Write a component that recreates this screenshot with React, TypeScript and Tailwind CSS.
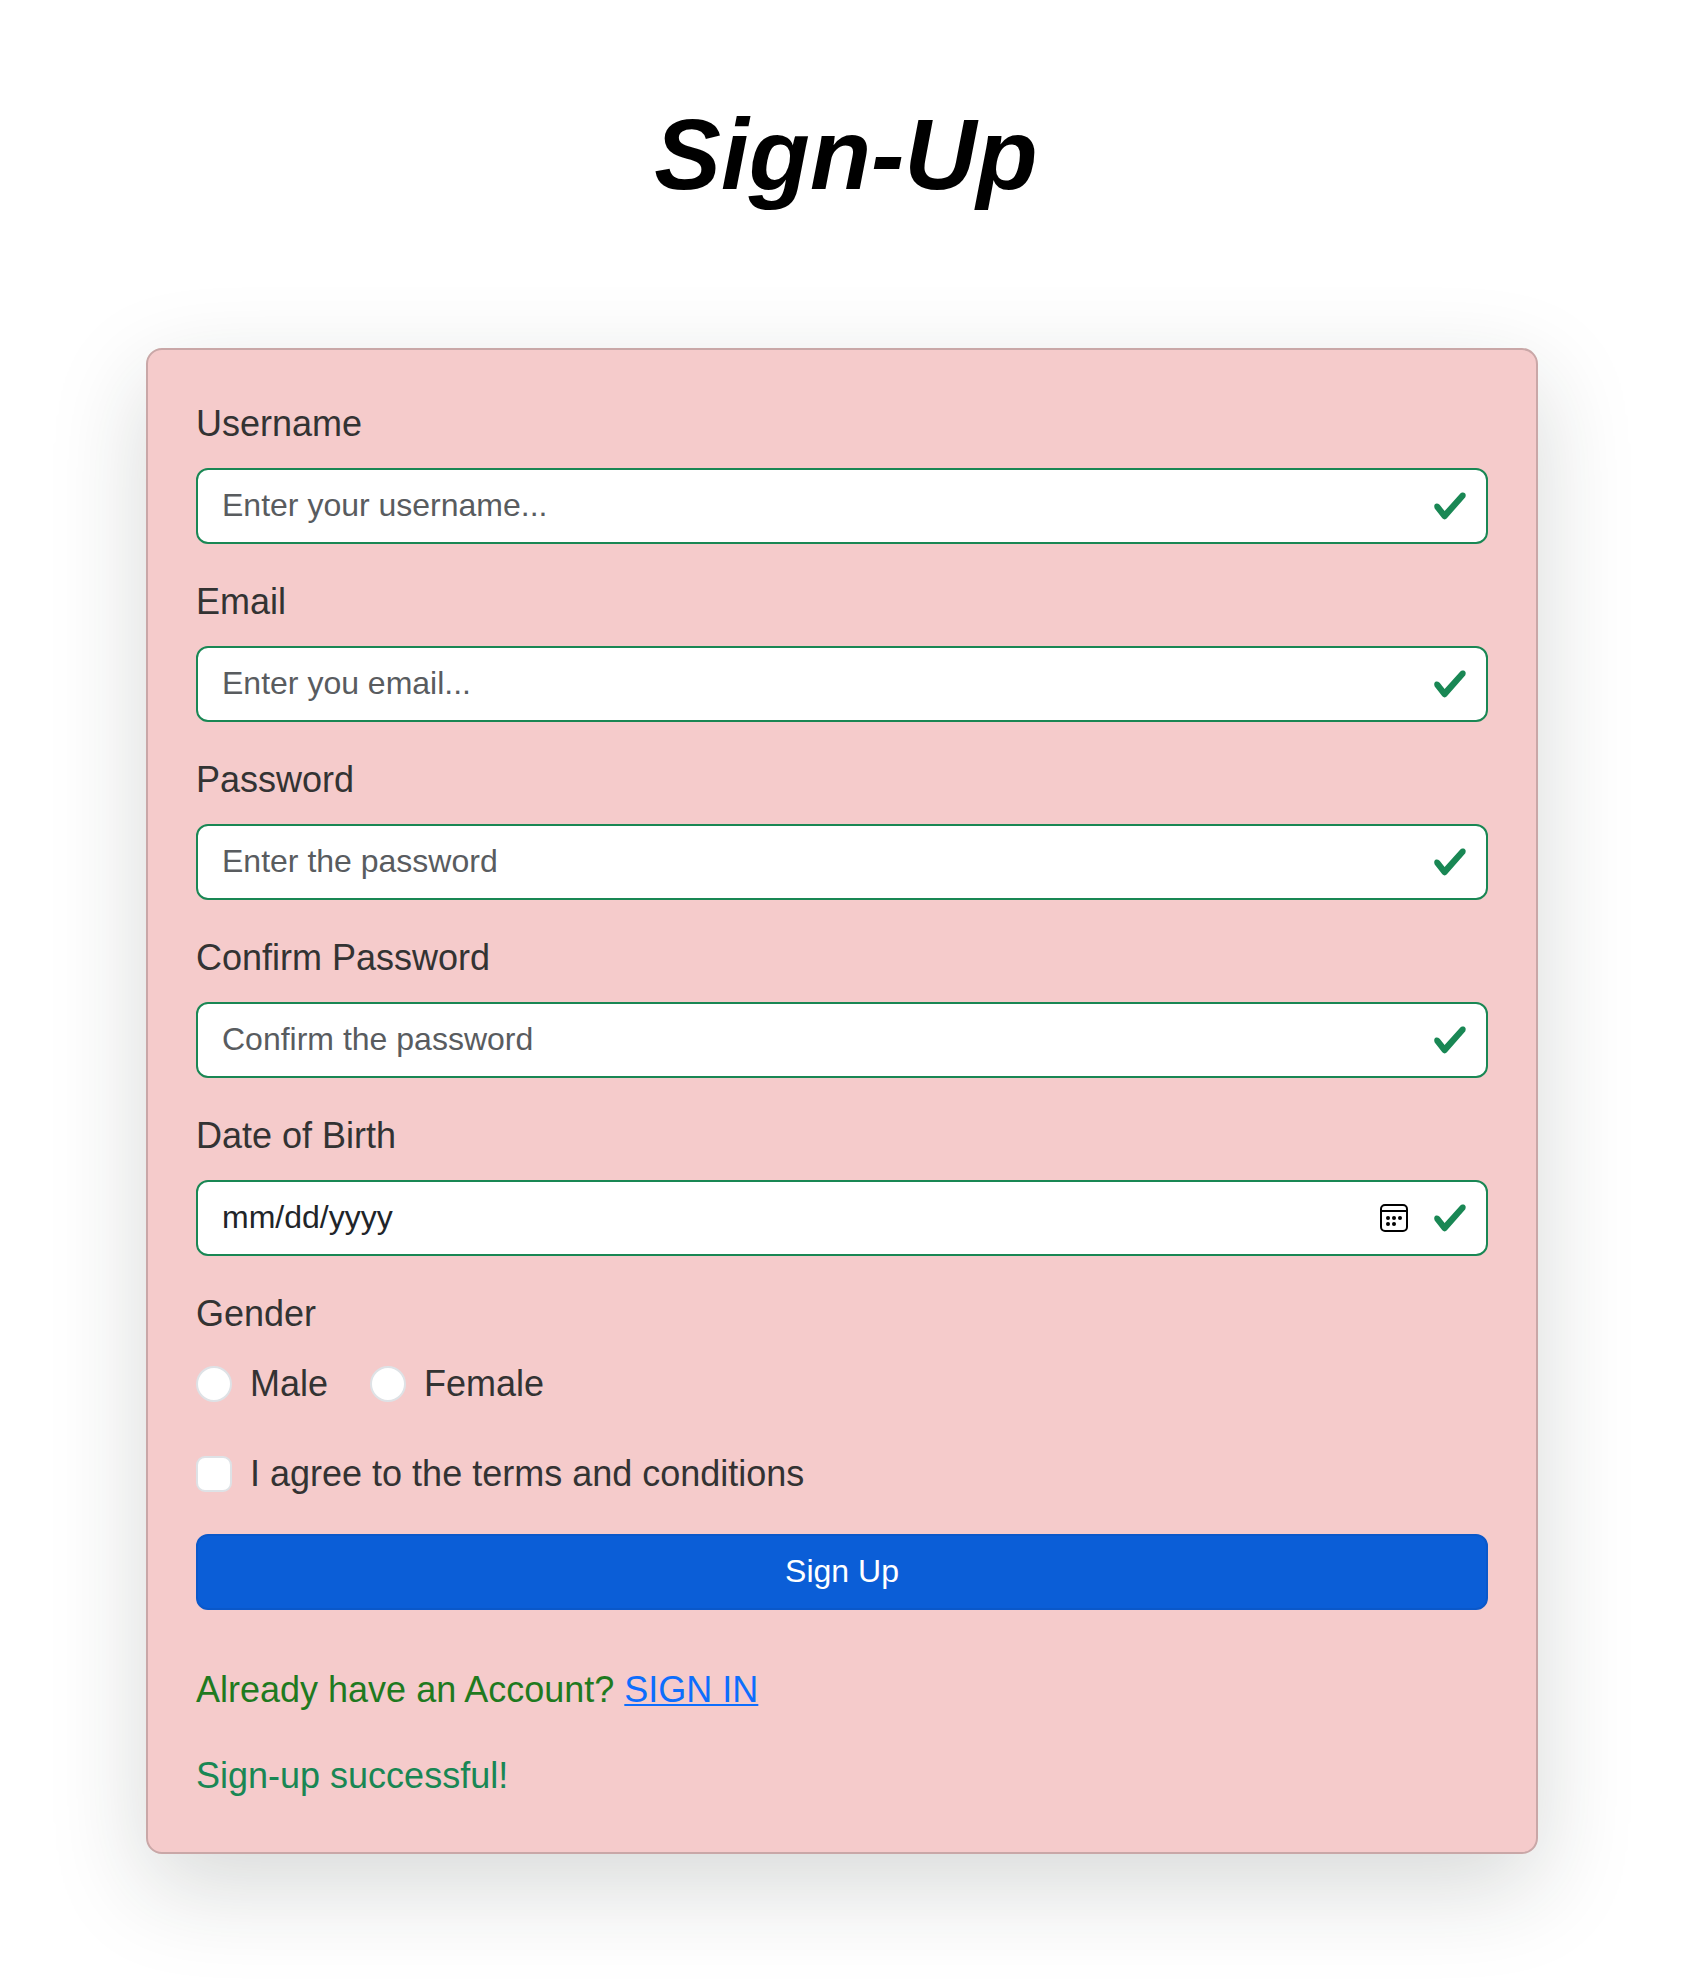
import React from "react";

const labelClass = "block h-[54px] text-[36px] leading-[52px] text-[#333333]";
const fieldClass =
  "flex h-[76px] w-full items-center rounded-[12px] border-2 border-[#198754] bg-white pl-6 pr-[18px] text-[32px] leading-[48px]";

function CheckMark() {
  return (
    <svg className="h-9 w-9 shrink-0" viewBox="0 0 8 8" aria-hidden="true">
      <path
        fill="#198754"
        d="M2.3 6.73.6 4.53c-.4-1.04.46-1.4 1.1-.8l1.1 1.4 3.4-3.8c.6-.63 1.6-.27 1.2.7l-4 4.6c-.43.5-.8.4-1.1.1z"
      />
    </svg>
  );
}

function CalendarIcon() {
  return (
    <svg className="mr-6 h-7 w-7 shrink-0" viewBox="0 0 28 28" fill="none" aria-hidden="true">
      <rect x="1" y="1" width="26" height="26" rx="4" stroke="#000" strokeWidth="2" />
      <path d="M1 7h26" stroke="#000" strokeWidth="2" />
      <g fill="#000">
        <circle cx="8" cy="14" r="2" />
        <circle cx="14" cy="14" r="2" />
        <circle cx="20" cy="14" r="2" />
        <circle cx="8" cy="20" r="2" />
        <circle cx="14" cy="20" r="2" />
      </g>
    </svg>
  );
}

function TextField({ id, label, placeholder, type = "text" }: { id: string; label: string; placeholder: string; type?: string }) {
  return (
    <div className="mb-8">
      <label htmlFor={id} className={labelClass}>{label}</label>
      <div className={"mt-4 " + fieldClass}>
        <input
          id={id}
          type={type}
          placeholder={placeholder}
          className="h-12 min-w-0 flex-1 bg-transparent pb-0.5 outline-none placeholder:text-[#595c5f]"
        />
        <CheckMark />
      </div>
    </div>
  );
}

function Choice({ label, type }: { label: string; type: "radio" | "checkbox" }) {
  return (
    <label className="flex h-[54px] items-start text-[36px] leading-[52px] text-[#333333]">
      <input
        type={type}
        name={type === "radio" ? "gender" : "terms"}
        className={
          "mr-[18px] mt-2 h-9 w-9 shrink-0 appearance-none border-2 border-[#dee2e6] bg-white " +
          (type === "radio" ? "rounded-full" : "rounded-[9px]")
        }
      />
      {label}
    </label>
  );
}

export default function App() {
  return (
    <main className="flex h-[1984px] w-full flex-col items-center overflow-hidden bg-white font-['Liberation_Sans',Arial,sans-serif]">
      <h1 className="mt-[94px] h-[120px] pl-2 text-[100px] font-bold italic leading-[120px] text-black">Sign-Up</h1>
      <form className="mt-[134px] h-[1506px] w-[1392px] shrink-0 rounded-[16px] border-2 border-[#c9a7a7] bg-[#f5cbcb] p-12 shadow-[0_32px_96px_rgba(28,38,33,0.175)]">
        <TextField id="username" label="Username" placeholder="Enter your username..." />
        <TextField id="email" label="Email" placeholder="Enter you email..." />
        <TextField id="password" label="Password" placeholder="Enter the password" type="password" />
        <TextField id="confirm" label="Confirm Password" placeholder="Confirm the password" type="password" />
        <div className="mb-8">
          <span className={labelClass}>Date of Birth</span>
          <div className={"mt-4 " + fieldClass}>
            <span className="flex-1 pb-0.5 text-[#212529]">mm/dd/yyyy</span>
            <CalendarIcon />
            <CheckMark />
          </div>
        </div>
        <span className={labelClass}>Gender</span>
        <div className="mt-4 flex gap-[42px]">
          <Choice label="Male" type="radio" />
          <Choice label="Female" type="radio" />
        </div>
        <div className="mt-9">
          <Choice label="I agree to the terms and conditions" type="checkbox" />
        </div>
        <button
          type="button"
          className="mt-8 block h-[76px] w-full rounded-[12px] border-2 border-[#0a58ca] bg-[#0b5ed7] pb-0.5 text-[32px] leading-[48px] text-white"
        >
          Sign Up
        </button>
        <p className="mt-[54px] h-[54px] text-[36px] leading-[52px] text-[#1f7a1f]">
          Already have an Account?{" "}
          <a href="#" className="text-[#0d6efd] underline decoration-2 underline-offset-2">SIGN IN</a>
        </p>
        <p className="mt-8 h-[54px] text-[36px] leading-[52px] text-[#198754]">Sign-up successful!</p>
      </form>
    </main>
  );
}
